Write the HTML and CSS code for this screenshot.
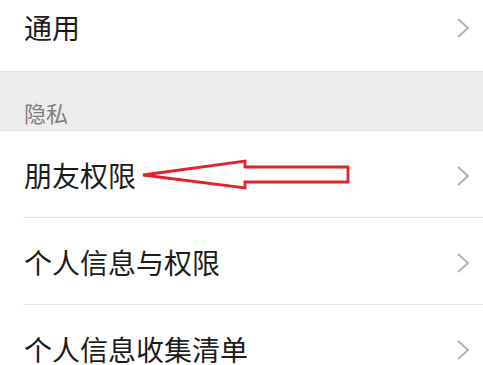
FILE: index.html
```html
<!DOCTYPE html>
<html lang="zh-CN">
<head>
<meta charset="utf-8">
<link rel="stylesheet" href="styles.css">
</head>
<body>
<div class="page">
  <div class="row first">
    <span class="label">通用</span>
    <svg class="chev" viewBox="0 0 12 20" width="12" height="20"><polyline points="1,1 11,10 1,19" fill="none" stroke="#b4b4b4" stroke-width="2"/></svg>
  </div>
  <div class="section">隐私</div>
  <div class="row divided annotated">
    <span class="label">朋友权限</span>
    <svg class="chev" viewBox="0 0 12 20" width="12" height="20"><polyline points="1,1 11,10 1,19" fill="none" stroke="#b4b4b4" stroke-width="2"/></svg>
    <svg class="arrow" viewBox="0 0 483 87" width="483" height="87"><polygon points="143,44 245,30 245,36 348,36 348,51 245,51 245,57" fill="none" stroke="#e3232b" stroke-width="2.8" stroke-linejoin="miter"/></svg>
  </div>
  <div class="row divided">
    <span class="label">个人信息与权限</span>
    <svg class="chev" viewBox="0 0 12 20" width="12" height="20"><polyline points="1,1 11,10 1,19" fill="none" stroke="#b4b4b4" stroke-width="2"/></svg>
  </div>
  <div class="row">
    <span class="label">个人信息收集清单</span>
    <svg class="chev" viewBox="0 0 12 20" width="12" height="20"><polyline points="1,1 11,10 1,19" fill="none" stroke="#b4b4b4" stroke-width="2"/></svg>
  </div>
</div>
</body>
</html>
```
FILE: styles.css
```css
html, body {
  margin: 0;
  padding: 0;
  background: #ffffff;
  overflow: hidden;
}
.page {
  width: 483px;
  font-family: "Noto Sans CJK SC", "Noto Sans", sans-serif;
  margin-top: -17px;
}
.row {
  height: 87px;
  display: flex;
  align-items: center;
  justify-content: space-between;
  padding: 0 14px 0 24px;
  box-sizing: border-box;
  background: #fff;
}
.row.first {
  height: 88px;
}
.row.divided {
  position: relative;
}
.row.divided::after {
  content: "";
  position: absolute;
  left: 23px;
  right: 0;
  bottom: 0;
  height: 1px;
  background: #e8e8e8;
}
.label {
  font-size: 28px;
  color: #1c1c1c;
  line-height: 36px;
}
.chev {
  display: block;
  margin-top: 2px;
}
.section {
  height: 60px;
  box-sizing: border-box;
  background: #ededed;
  border-top: 1px solid #e4e4e4;
  border-bottom: 1px solid #e0e0e0;
  display: flex;
  align-items: flex-end;
  padding: 0 0 3px 24px;
  font-size: 22px;
  line-height: 30px;
  color: #808080;
}
.arrow {
  position: absolute;
  left: 0;
  top: 0;
}
```
